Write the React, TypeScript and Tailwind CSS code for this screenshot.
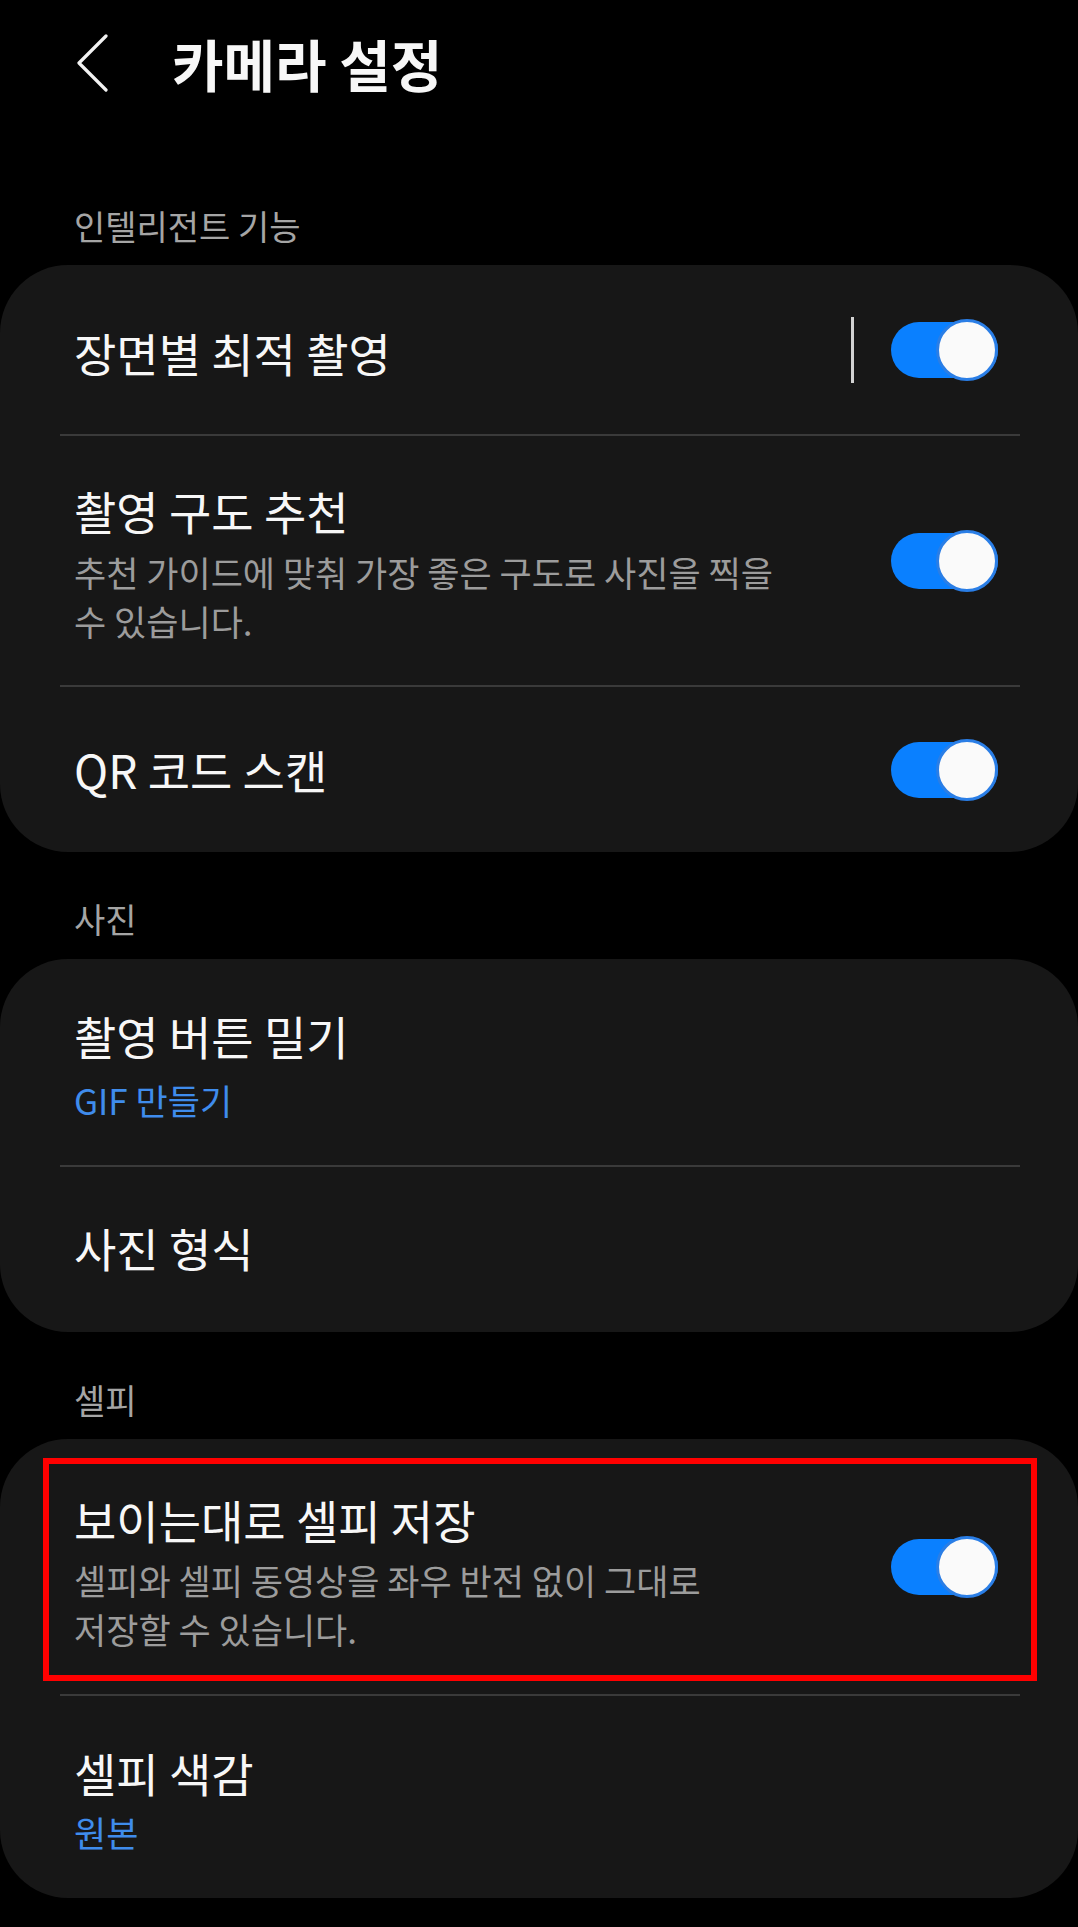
import React from 'react';

type RowProps = {
  title: string;
  sub?: string;
  blue?: boolean;
  toggle?: boolean;
  bar?: boolean;
  pad: string;
  subGap?: string;
};

const Toggle: React.FC = () => (
  <div className="flex h-[56px] w-[107px] shrink-0 items-center justify-end rounded-full bg-[#0a80ff]">
    <div className="h-[62px] w-[62px] shrink-0 rounded-full border-[3px] border-[#2a7ee6] bg-[#fafafa]" />
  </div>
);

const Row: React.FC<RowProps> = ({ title, sub, blue, toggle, bar, pad, subGap }) => (
  <div className="flex items-center pl-[74px] pr-[80px]">
    <div className={`flex-1 ${pad}`}>
      <p className="text-[46px] leading-[56px] text-[#f7f7f7]">{title}</p>
      {sub && (
        <p
          className={`max-w-[718px] break-keep text-[35px] leading-[49px] ${subGap ?? 'mt-[8px]'} ${
            blue ? 'text-[#3f8cec]' : 'text-[#9c9c9c]'
          }`}
        >
          {sub}
        </p>
      )}
    </div>
    {bar && <div className="mr-[37px] h-[66px] w-[3px] bg-[#d2d2d2]" />}
    {toggle && <Toggle />}
  </div>
);

const Divider: React.FC = () => <div className="ml-[60px] mr-[58px] h-[2px] bg-[#3a3a3a]" />;

const Label: React.FC<{ text: string; className: string }> = ({ text, className }) => (
  <p className={`px-[74px] text-[34px] leading-[40px] text-[#a5a5a5] ${className}`}>{text}</p>
);

export default function App() {
  return (
    <div className="h-[1927px] w-[1078px] overflow-hidden bg-black font-['Noto_Sans_CJK_KR','Noto_Sans',sans-serif]">
      {/* header */}
      <div className="flex h-[126px] items-center pl-[77px]">
        <svg width="32" height="58" viewBox="0 0 32 58" fill="none">
          <polyline points="29,2 2,29 29,56" stroke="#f2f2f2" strokeWidth="3.2" strokeLinecap="round" strokeLinejoin="round" />
        </svg>
        <h1 className="ml-[63px] text-[56px] font-bold leading-[66px] text-[#f7f7f7]">카메라 설정</h1>
      </div>

      <Label text="인텔리전트 기능" className="pt-[80px] pb-[19px]" />
      <div className="rounded-[68px] bg-[#171717]">
        <Row title="장면별 최적 촬영" bar toggle pad="pt-[59px] pb-[54px]" />
        <Divider />
        <Row
          title="촬영 구도 추천"
          sub="추천 가이드에 맞춰 가장 좋은 구도로 사진을 찍을 수 있습니다."
          toggle
          pad="pt-[46px] pb-[40px]"
          subGap="mt-[9px]"
        />
        <Divider />
        <Row title="QR 코드 스캔" toggle pad="pt-[54px] pb-[55px]" />
      </div>

      <Label text="사진" className="pt-[47px] pb-[20px]" />
      <div className="rounded-[68px] bg-[#171717]">
        <Row title="촬영 버튼 밀기" sub="GIF 만들기" blue pad="pt-[48px] pb-[41px]" subGap="mt-[12px]" />
        <Divider />
        <Row title="사진 형식" pad="pt-[52px] pb-[57px]" />
      </div>

      <Label text="셀피" className="pt-[48px] pb-[19px]" />
      <div className="relative rounded-[68px] bg-[#171717]">
        <Row
          title="보이는대로 셀피 저장"
          sub="셀피와 셀피 동영상을 좌우 반전 없이 그대로 저장할 수 있습니다."
          toggle
          pad="pt-[52px] pb-[41px]"
          subGap="mt-[8px]"
        />
        <Divider />
        <Row title="셀피 색감" sub="원본" blue pad="pt-[48px] pb-[42px]" subGap="mt-[7px]" />
        {/* annotation box */}
        <div className="pointer-events-none absolute left-[43px] top-[19px] h-[223px] w-[994px] border-[6px] border-[#ff0000]" />
      </div>
    </div>
  );
}
